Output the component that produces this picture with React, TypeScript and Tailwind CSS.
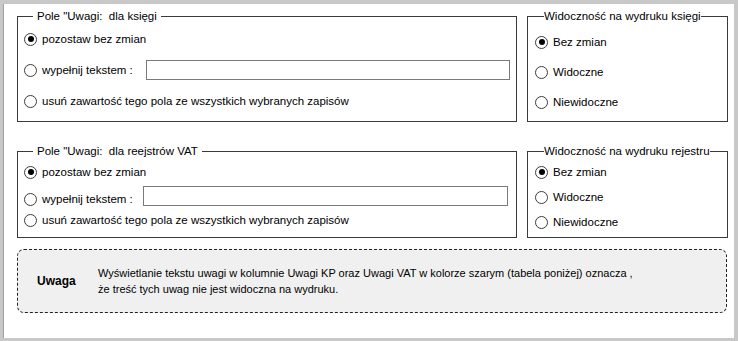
import React from "react";

const font = "font-['Liberation_Sans',Arial,sans-serif]";

const Radio = ({ checked, label }: { checked?: boolean; label: string }) => (
  <label className="flex items-center h-[14px] leading-[14px] text-[11.5px] text-black whitespace-nowrap">
    <span className="mr-[5px] flex h-[13px] w-[13px] shrink-0 items-center justify-center rounded-full border border-[#3c3c3c] bg-white">
      {checked && <span className="h-[6px] w-[6px] rounded-full bg-black" />}
    </span>
    {label}
  </label>
);

const TextInput = ({ width }: { width: number }) => (
  <div
    className="h-[20px] border border-[#7a7a7a] bg-white"
    style={{ width }}
  />
);

const RemarksGroup = ({
  title,
  compact,
}: {
  title: string;
  compact?: boolean;
}) => (
  <fieldset
    className={`w-[500px] min-w-0 shrink-0 border border-[#3a3a3a] ${
      compact ? "h-[94px] pt-[4px]" : "h-[113px] pt-[6px]"
    } pl-[6px]`}
  >
    <legend className="ml-[9px] px-[4px] text-[11.5px] leading-[14px] text-black whitespace-pre">
      {title}
    </legend>
    <div className={`flex flex-col ${compact ? "gap-[4px]" : "gap-[11px]"}`}>
      <div className="flex h-[20px] items-center">
        <Radio checked label="pozostaw bez zmian" />
      </div>
      <div className={`flex h-[20px] ${compact ? "items-end" : "items-center"}`}>
        <div className={compact ? "w-[119px]" : "w-[122px]"}>
          <Radio label="wypełnij tekstem :" />
        </div>
        <TextInput width={compact ? 365 : 364} />
      </div>
      <div className="flex h-[20px] items-center">
        <Radio label="usuń zawartość tego pola ze wszystkich wybranych zapisów" />
      </div>
    </div>
  </fieldset>
);

const VisibilityGroup = ({
  title,
  compact,
}: {
  title: string;
  compact?: boolean;
}) => (
  <fieldset
    className={`w-[201px] min-w-0 shrink-0 border border-[#3a3a3a] ${
      compact ? "h-[94px] pt-[4px]" : "h-[113px] pt-[9px]"
    } pl-[7px]`}
  >
    <legend className="ml-[9px] text-[11.5px] leading-[14px] text-black whitespace-nowrap">
      {title}
    </legend>
    <div className={`flex flex-col ${compact ? "gap-[5px]" : "gap-[10px]"}`}>
      {["Bez zmian", "Widoczne", "Niewidoczne"].map((l, i) => (
        <div key={l} className="flex h-[20px] items-center">
          <Radio checked={i === 0} label={l} />
        </div>
      ))}
    </div>
  </fieldset>
);

export default function App() {
  return (
    <div
      className={`${font} h-[341px] w-[738px] overflow-hidden bg-[#c8c8c8] pb-[3px] pl-[3px] pr-[4px] pt-[4px]`}
    >
      <div className="h-full w-full border-l border-[#a0a0a0] bg-white pl-[13px] pt-[5px]">
        <div className="flex gap-[10px]">
          <RemarksGroup title={'Pole "Uwagi:  dla księgi'} />
          <VisibilityGroup title="Widoczność na wydruku księgi" />
        </div>
        <div className="mt-[22px] flex gap-[10px]">
          <RemarksGroup compact title={'Pole "Uwagi:  dla reejstrów VAT'} />
          <VisibilityGroup compact title="Widoczność na wydruku rejestru" />
        </div>
        <div className="mt-[11px] flex h-[64px] w-[710px] items-center rounded-[7px] border border-dashed border-[#222] bg-[#f0f0f0]">
          <div className="w-[80px] pl-[19px] text-[12px] font-bold text-black">
            Uwaga
          </div>
          <div className="text-[11px] leading-[12px] text-black">
            <div>
              Wyświetlanie tekstu uwagi w kolumnie Uwagi KP oraz Uwagi VAT w
              kolorze szarym (tabela poniżej) oznacza ,
            </div>
            <div className="mt-[4px]">
              że treść tych uwag nie jest widoczna na wydruku.
            </div>
          </div>
        </div>
      </div>
    </div>
  );
}
